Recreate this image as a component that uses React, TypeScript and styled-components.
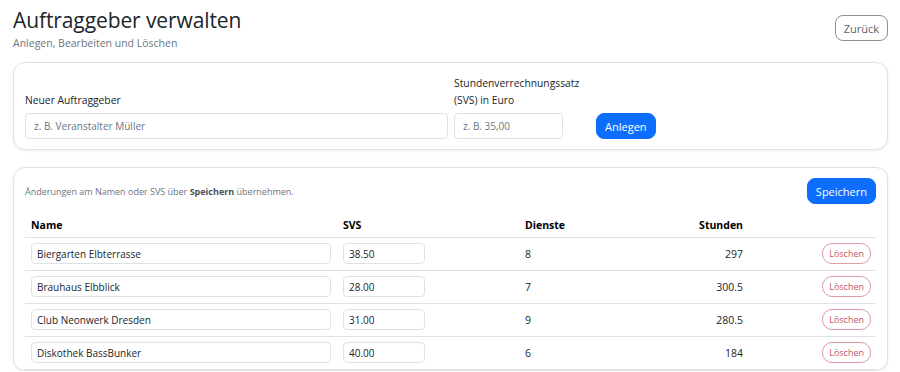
import React from "react";
import styled, { createGlobalStyle } from "styled-components";

const Global = createGlobalStyle`
  html, body { margin: 0; padding: 0; background: #fff; }
  body { font-family: "Open Sans", "Noto Sans", sans-serif; color: #212529; }
  * { box-sizing: border-box; }
`;

const Page = styled.div`
  padding: 6px 12px 0 13px;
  display: flex;
  flex-direction: column;
`;

const Header = styled.header`
  display: flex;
  justify-content: space-between;
  align-items: flex-start;
`;

const TitleBlock = styled.div`
  display: flex;
  flex-direction: column;
`;

const Title = styled.h1`
  margin: 0;
  font-size: 21px;
  font-weight: 400;
  line-height: 28px;
  color: #212529;
  letter-spacing: -0.1px;
`;

const Subtitle = styled.p`
  margin: 1px 0 0;
  font-size: 10.5px;
  color: #6c757d;
  line-height: 16px;
`;

const Button = styled.button<{ $variant: "primary" | "outline" | "danger"; $small?: boolean }>`
  font-family: inherit;
  cursor: pointer;
  border-radius: ${(p) => (p.$small ? "10px" : "8px")};
  height: ${(p) => (p.$small ? "21px" : "26px")};
  padding: 0 ${(p) => (p.$small ? "6px" : "8px")};
  font-size: ${(p) => (p.$small ? "9px" : "11px")};
  line-height: 1;
  border: 1px solid
    ${(p) =>
      p.$variant === "primary" ? "#0d6efd" : p.$variant === "danger" ? "#dc9ca5" : "#8a9096"};
  background: ${(p) => (p.$variant === "primary" ? "#0d6efd" : "#fff")};
  color: ${(p) =>
    p.$variant === "primary" ? "#fff" : p.$variant === "danger" ? "#c65467" : "#5c636a"};
`;

const BackButton = styled(Button)`
  margin-top: 9px;
`;

const Card = styled.section`
  border: 1px solid #dee2e6;
  border-radius: 12px;
  box-shadow: 0 1px 3px rgba(0, 0, 0, 0.07);
  background: #fff;
`;

const CreateCard = styled(Card)`
  margin-top: 11px;
  padding: 12px 11px 10px;
  display: flex;
  align-items: flex-end;
`;

const Field = styled.label<{ $width: number }>`
  display: flex;
  flex-direction: column;
  width: ${(p) => p.$width}px;
  margin-right: 6px;
`;

const Label = styled.span`
  font-size: 10.3px;
  line-height: 17px;
  margin-bottom: 4px;
  color: #212529;
`;

const Input = styled.input<{ $small?: boolean }>`
  font-family: inherit;
  width: 100%;
  height: ${(p) => (p.$small ? "21px" : "26px")};
  border: 1px solid #dee2e6;
  border-radius: 4px;
  padding: 0 ${(p) => (p.$small ? "5px" : "8px")};
  font-size: 10px;
  color: #212529;
  background: #fff;
  outline: none;
  &::placeholder { color: #6c757d; }
`;

const CreateButton = styled(Button)`
  margin-left: 27px;
`;

const ListCard = styled(Card)`
  margin-top: 17px;
  padding: 10px 11px 0 11px;
`;

const ListTop = styled.div`
  display: flex;
  justify-content: space-between;
  align-items: center;
`;

const Hint = styled.p`
  margin: 0;
  font-size: 9px;
  color: #6c757d;
  b { color: #495057; font-weight: 700; }
`;

const Table = styled.table`
  width: 100%;
  margin-top: 4px;
  border-collapse: collapse;
  table-layout: fixed;
`;

const Th = styled.th<{ $align?: string }>`
  text-align: ${(p) => p.$align || "left"};
  vertical-align: bottom;
  font-size: 10.5px;
  font-weight: 700;
  color: #000;
  padding: 0 6px 5px;
  border-bottom: 1px solid #dee2e6;
  height: 29px;
`;

const Td = styled.td<{ $align?: string }>`
  text-align: ${(p) => p.$align || "left"};
  font-size: 10.5px;
  color: #212529;
  padding: 0 6px;
  height: 33px;
  border-bottom: 1px solid #dee2e6;
`;

const DeleteCell = styled(Td)`
  padding-right: 5px;
`;

const SvsInput = styled(Input)`
  width: 82px;
`;

const rows = [
  { name: "Biergarten Elbterrasse", svs: "38.50", dienste: 8, stunden: "297" },
  { name: "Brauhaus Elbblick", svs: "28.00", dienste: 7, stunden: "300.5" },
  { name: "Club Neonwerk Dresden", svs: "31.00", dienste: 9, stunden: "280.5" },
  { name: "Diskothek BassBunker", svs: "40.00", dienste: 6, stunden: "184" },
];

export default function App() {
  return (
    <>
      <Global />
      <Page>
        <Header>
          <TitleBlock>
            <Title>Auftraggeber verwalten</Title>
            <Subtitle>Anlegen, Bearbeiten und Löschen</Subtitle>
          </TitleBlock>
          <BackButton $variant="outline">Zurück</BackButton>
        </Header>

        <CreateCard>
          <Field $width={423}>
            <Label>Neuer Auftraggeber</Label>
            <Input placeholder="z. B. Veranstalter Müller" />
          </Field>
          <Field $width={109}>
            <Label>
              Stundenverrechnungssatz
              <br />
              (SVS) in Euro
            </Label>
            <Input placeholder="z. B. 35,00" />
          </Field>
          <CreateButton $variant="primary">Anlegen</CreateButton>
        </CreateCard>

        <ListCard>
          <ListTop>
            <Hint>
              Änderungen am Namen oder SVS über <b>Speichern</b> übernehmen.
            </Hint>
            <Button $variant="primary">Speichern</Button>
          </ListTop>
          <Table>
            <colgroup>
              <col style={{ width: 312 }} />
              <col style={{ width: 182 }} />
              <col style={{ width: 120 }} />
              <col style={{ width: 110 }} />
              <col />
            </colgroup>
            <thead>
              <tr>
                <Th>Name</Th>
                <Th>SVS</Th>
                <Th>Dienste</Th>
                <Th $align="right">Stunden</Th>
                <Th />
              </tr>
            </thead>
            <tbody>
              {rows.map((r) => (
                <tr key={r.name}>
                  <Td>
                    <Input $small defaultValue={r.name} />
                  </Td>
                  <Td>
                    <SvsInput $small defaultValue={r.svs} />
                  </Td>
                  <Td>{r.dienste}</Td>
                  <Td $align="right">{r.stunden}</Td>
                  <DeleteCell $align="right">
                    <Button $variant="danger" $small>
                      Löschen
                    </Button>
                  </DeleteCell>
                </tr>
              ))}
            </tbody>
          </Table>
        </ListCard>
      </Page>
    </>
  );
}
